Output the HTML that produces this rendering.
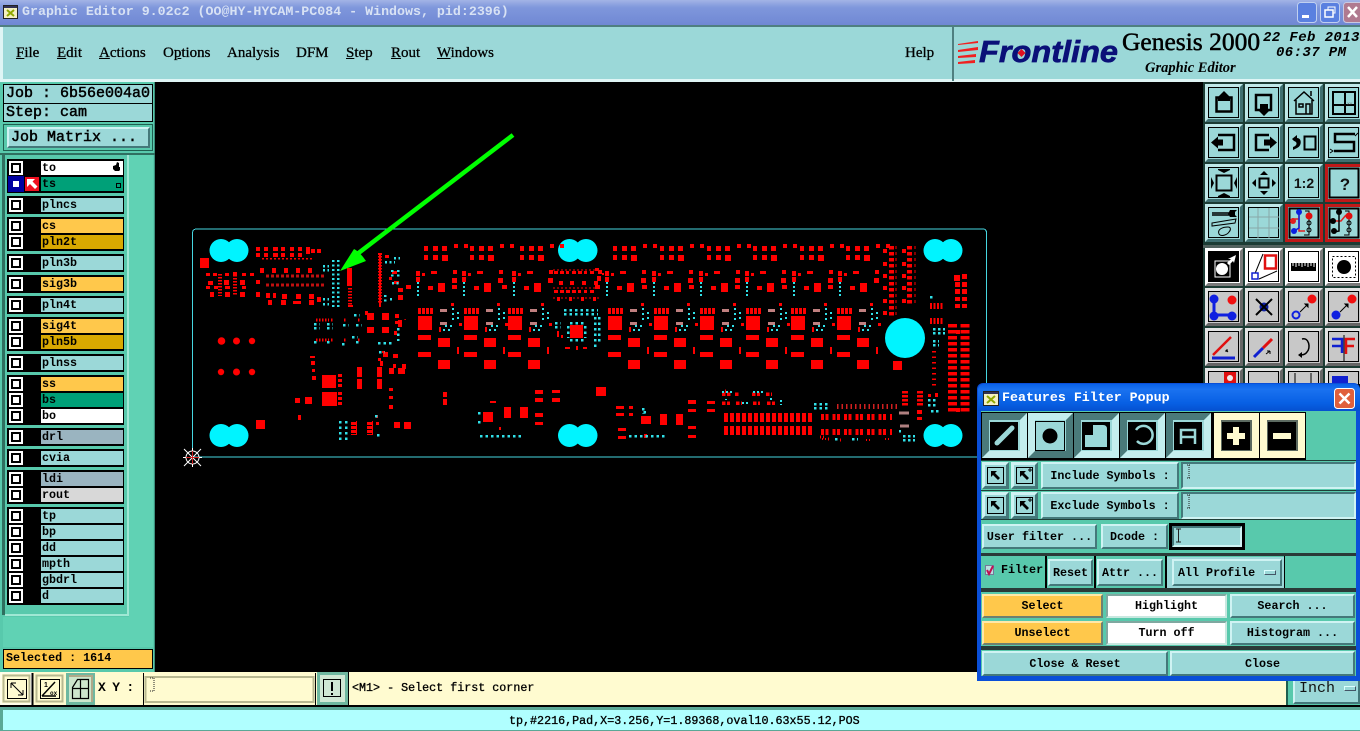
<!DOCTYPE html>
<html><head><meta charset="utf-8"><title>Graphic Editor</title>
<style>
html,body{margin:0;padding:0;width:1360px;height:731px;overflow:hidden;background:#000}
.a{position:absolute;box-sizing:border-box}
.t{position:absolute;white-space:pre;font-family:"Liberation Mono",monospace;font-weight:bold;font-size:11.7px;color:#000}
.mn{position:absolute;top:45px;font:15px/17px "Liberation Serif",serif;color:#000;white-space:pre;-webkit-text-stroke:.3px #000}
.mn u{text-decoration:underline}
.g{position:absolute;left:7px;width:117px;background:#000}
.l{position:absolute;left:41px;width:82px;height:14px;font:bold 11.7px/14px "Liberation Mono",monospace;padding-left:1px;box-sizing:border-box;background:#9bd8d8;color:#000;white-space:pre}
.c{position:absolute;left:9px;width:14px;height:14px;box-sizing:border-box;border:2px solid #fff;background:#000}
.c:after{content:"";position:absolute;left:2px;top:2px;width:6px;height:6px;background:#fff}
.b{position:absolute;box-sizing:border-box;background:#9bd8d8;border:2px solid;border-color:#cff3f3 #44787a #44787a #cff3f3;font:bold 11.7px "Liberation Mono",monospace;color:#000;text-align:center;white-space:pre;display:flex;align-items:center;justify-content:center}
.o{background:#ffc84b;border-color:#ffe8a8 #6f8070 #6f8070 #ffe8a8}
.w{background:#fff;border-color:#7fa8a0 #c8e8e0 #c8e8e0 #7fa8a0}
.in{position:absolute;box-sizing:border-box;background:#9bd8d8;border:2px solid;border-color:#44787a #cff3f3 #cff3f3 #44787a}
</style></head><body>

<!-- title bar -->
<div class="a" style="left:0;top:0;width:1360px;height:25px;background:linear-gradient(#a3b4e6,#7f97dc 30%,#7088d4)"></div>
<svg class="a" style="left:3px;top:5px" width="15" height="14"><rect width="15" height="14" fill="#222"/><rect x="1" y="1" width="13" height="12" fill="#f4f0c0"/><rect x="1" y="1" width="13" height="2" fill="#335"/><path d="M4 5l7 6M11 5l-7 6" stroke="#90a800" stroke-width="2"/></svg>
<div class="t" style="left:22px;top:4px;font-size:13.3px;line-height:15px;color:#d8e2f4">Graphic Editor 9.02c2 (OO@HY-HYCAM-PC084 - Windows, pid:2396)</div>
<svg class="a" style="left:1296px;top:1px" width="64" height="23">
<rect x="1.500" y="1.500" width="19" height="20" rx="3" fill="#5a80e0" stroke="#c0d0f0"/><rect x="6" y="14" width="7" height="3" fill="#fff"/>
<rect x="24.500" y="1.500" width="19" height="20" rx="3" fill="#5a80e0" stroke="#c0d0f0"/><rect x="29" y="9" width="8" height="7" fill="none" stroke="#fff" stroke-width="1.500"/><path d="M32 9V6h7v6h-2" fill="none" stroke="#fff"/>
<rect x="47.500" y="1.500" width="20" height="20" rx="3" fill="#b07a90" stroke="#c8c8e0"/><path d="M52 6l9 10M61 6l-9 10" stroke="#fff" stroke-width="2.500"/></svg>

<!-- menu -->
<div class="a" style="left:0;top:25px;width:1360px;height:57px;background:#9bd8d8;border-top:2px solid #4f7f80;border-bottom:3px solid #dff5f5"></div>
<div class="a" style="left:0;top:27px;width:3px;height:52px;background:#dff5f5"></div>
<div class="a" style="left:952px;top:27px;width:2px;height:54px;background:#4f7f80"></div>
<div class="mn" style="left:16px"><u>F</u>ile</div>
<div class="mn" style="left:57px"><u>E</u>dit</div>
<div class="mn" style="left:99px"><u>A</u>ctions</div>
<div class="mn" style="left:163px">O<u>p</u>tions</div>
<div class="mn" style="left:227px">Analysis</div>
<div class="mn" style="left:296px">DFM</div>
<div class="mn" style="left:346px"><u>S</u>tep</div>
<div class="mn" style="left:391px"><u>R</u>out</div>
<div class="mn" style="left:437px"><u>W</u>indows</div>
<div class="mn" style="left:905px">Help</div>

<svg class="a" style="left:955px;top:28px" width="170" height="48">
<path d="M3 16L23 13V15L3 17zM3 22L23 19V22L3 24zM3 28L21 26V29L3 30zM3 34L20 32V35L3 36z" fill="#f02020"/>
<text x="24" y="34" font-family="Liberation Sans" font-weight="bold" font-style="italic" font-size="31" fill="#0a1078" stroke="#0a1078" stroke-width=".7" textLength="139" lengthAdjust="spacingAndGlyphs">Frontline</text>
<path d="M66.500 21l4 4-4 4-4-4z" fill="#e01020"/></svg>
<div class="a" style="left:1122px;top:27px;font:25.500px/29px 'Liberation Serif',serif;white-space:pre;-webkit-text-stroke:.5px #000">Genesis 2000</div>
<div class="a" style="left:1145px;top:60px;font:italic bold 14.500px/16px 'Liberation Serif',serif;white-space:pre">Graphic Editor</div>
<div class="t" style="left:1263px;top:31px;font:italic bold 14px/15px 'Liberation Mono',monospace;letter-spacing:.4px">22 Feb 2013</div>
<div class="t" style="left:1276px;top:46px;font:italic bold 14px/15px 'Liberation Mono',monospace;letter-spacing:.4px">06:37 PM</div>

<!-- left panel -->
<div class="a" style="left:0;top:82px;width:155px;height:591px;background:#58c9ac;border-right:1px solid #3c8f7c"></div>
<div class="a" style="left:3px;top:84px;width:150px;height:20px;background:#9bd8d8;border:1px solid #000"></div>
<div class="a" style="left:3px;top:103px;width:150px;height:19px;background:#9bd8d8;border:1px solid #000"></div>
<div class="t" style="left:6px;top:85px;font-size:15px;line-height:17px;font-weight:normal;-webkit-text-stroke:.5px #000">Job : 6b56e004a0</div>
<div class="t" style="left:6px;top:104px;font-size:15px;line-height:17px;font-weight:normal;-webkit-text-stroke:.5px #000">Step: cam</div>
<div class="a" style="left:3px;top:124px;width:150px;height:27px;background:#58c9ac;border:1px solid #1f5f50"></div>
<div class="b" style="left:7px;top:127px;width:143px;height:21px;justify-content:flex-start;padding-left:2px;font-size:15px;font-weight:normal;-webkit-text-stroke:.5px #000">Job Matrix ...</div>
<div class="a" style="left:0;top:153px;width:155px;height:2px;background:#2f6f60"></div>
<div class="a" style="left:2px;top:155px;width:3px;height:460px;background:#2f6f60"></div>
<div class="a" style="left:127px;top:155px;width:2px;height:460px;background:#9fe8d4"></div>
<div class="a" style="left:129px;top:155px;width:24px;height:462px;background:#60d2b4"></div>
<div class="a" style="left:5px;top:614px;width:124px;height:2px;background:#9fe8d4"></div>
<div class="a" style="left:3px;top:617px;width:150px;height:30px;background:#60d2b4"></div>
<div class="a" style="left:3px;top:649px;width:150px;height:20px;background:#ffc84b;border:1px solid #000"></div>
<div class="t" style="left:6px;top:651px;line-height:15px">Selected : 1614</div>

<div class="g" style="top:159px;height:34px"></div>
<div class="g" style="top:196px;height:18px"></div>
<div class="g" style="top:217px;height:34px"></div>
<div class="g" style="top:254px;height:18px"></div>
<div class="g" style="top:275px;height:18px"></div>
<div class="g" style="top:296px;height:18px"></div>
<div class="g" style="top:317px;height:34px"></div>
<div class="g" style="top:354px;height:18px"></div>
<div class="g" style="top:375px;height:50px"></div>
<div class="g" style="top:428px;height:18px"></div>
<div class="g" style="top:449px;height:18px"></div>
<div class="g" style="top:470px;height:34px"></div>
<div class="g" style="top:507px;height:98px"></div>

<div class="l" style="top:161px;background:#fff">to</div>
<div class="l" style="top:177px;background:#00a078">ts</div>
<div class="l" style="top:198px">plncs</div>
<div class="l" style="top:219px;background:#ffc84b">cs</div>
<div class="l" style="top:235px;background:#d8a800">pln2t</div>
<div class="l" style="top:256px">pln3b</div>
<div class="l" style="top:277px;background:#ffc84b">sig3b</div>
<div class="l" style="top:298px">pln4t</div>
<div class="l" style="top:319px;background:#ffc84b">sig4t</div>
<div class="l" style="top:335px;background:#d8a800">pln5b</div>
<div class="l" style="top:356px">plnss</div>
<div class="l" style="top:377px;background:#ffc84b">ss</div>
<div class="l" style="top:393px;background:#00a078">bs</div>
<div class="l" style="top:409px;background:#fff">bo</div>
<div class="l" style="top:430px;background:#9ab4c0">drl</div>
<div class="l" style="top:451px">cvia</div>
<div class="l" style="top:472px;background:#9ab4c0">ldi</div>
<div class="l" style="top:488px;background:#d8d8d8">rout</div>
<div class="l" style="top:509px">tp</div>
<div class="l" style="top:525px">bp</div>
<div class="l" style="top:541px">dd</div>
<div class="l" style="top:557px">mpth</div>
<div class="l" style="top:573px">gbdrl</div>
<div class="l" style="top:589px">d</div>

<div class="a" style="left:8px;top:176px;width:16px;height:16px;background:#0000a0"></div>
<div class="c" style="top:161px"></div><div class="c" style="top:177px;border-color:#0000a0;background:#0000a0"></div>
<div class="c" style="top:198px"></div><div class="c" style="top:219px"></div><div class="c" style="top:235px"></div><div class="c" style="top:256px"></div><div class="c" style="top:277px"></div><div class="c" style="top:298px"></div><div class="c" style="top:319px"></div><div class="c" style="top:335px"></div><div class="c" style="top:356px"></div><div class="c" style="top:377px"></div><div class="c" style="top:393px"></div><div class="c" style="top:409px"></div><div class="c" style="top:430px"></div><div class="c" style="top:451px"></div><div class="c" style="top:472px"></div><div class="c" style="top:488px"></div><div class="c" style="top:509px"></div><div class="c" style="top:525px"></div><div class="c" style="top:541px"></div><div class="c" style="top:557px"></div><div class="c" style="top:573px"></div><div class="c" style="top:589px"></div>
<svg class="a" style="left:0;top:155px" width="125" height="40">
<rect x="25" y="22" width="14" height="14" fill="#f01020"/><path d="M27 24h8l-2.500 2.500 5 5-2.500 2.500-5-5-3 3z" fill="#fff"/>
<path d="M113 11l3-1 1-3 2 1v4h1v3l-1 1h-4l-2-2z" fill="#000"/>
<rect x="116.500" y="28.500" width="4" height="4" fill="none" stroke="#000"/></svg>

<!-- PCB -->
<svg class="a" style="left:0;top:0" width="1360" height="731" shape-rendering="crispEdges">
<defs>
<g id="top"><path d="M-3 246h4v5h-4zM6 246h5v5h-5zM15 246h5v5h-5zM-3 255h4v5h-4zM6 255h5v5h-5zM15 255h6v6h-6zM27 244h4v4h-4zM37 244h4v4h-4z
M-11 271h4v5h-4zM-11 277h4v5h-4zM-5 273h3v3h-3zM4 271h6v3h-6zM26 270h4v4h-4zM25 278h5v5h-5zM1 286h5v4h-5zM11 283h7v9h-7zM-21 285h5v4h-5z" fill="#f00"/>
<path d="M-9 282v16" stroke="#30e0e8" stroke-width="2" stroke-dasharray="2 2"/></g>
<g id="ch"><path d="M-7 316h14v14h-14zM-7 308h3v6h-3zM-3 308h3v6h-3zM1 308h3v6h-3zM5 308h3v6h-3zM-7 335h13v5h-13zM-7 352h13v5h-13zM13 338h12v9h-12zM13 360h12v9h-12zM32 347h2v7h-2zM26 303h3v3h-3zM14 327h2v5h-2zM34 323h3v3h-3z" fill="#f00"/>
<path d="M15 309h7v3h-7zM15 322h7v3h-7z" fill="#c08080"/>
<path d="M28 308v14M33 312v8" stroke="#30e0e8" stroke-width="2" stroke-dasharray="2 3"/>
<path d="M18 330h10M20 326h8" stroke="#30e0e8" stroke-width="2" stroke-dasharray="2 3"/></g>
</defs>
<path d="M192.500 233Q192.500 229 196.500 229H983Q986.500 229 986.500 233V457H192.500Z" fill="none" stroke="#46d6e0"/>
<g shape-rendering="auto" fill="#00f4ff">
<circle cx="221" cy="250.500" r="11.500"/><circle cx="237" cy="250.500" r="11.500"/>
<circle cx="221" cy="435.500" r="11.500"/><circle cx="237" cy="435.500" r="11.500"/>
<circle cx="569.500" cy="250.500" r="11.500"/><circle cx="586" cy="250.500" r="11.500"/>
<circle cx="569.500" cy="435.500" r="11.500"/><circle cx="586" cy="435.500" r="11.500"/>
<circle cx="935" cy="250.500" r="11.500"/><circle cx="951" cy="250.500" r="11.500"/>
<circle cx="935" cy="435.500" r="11.500"/><circle cx="951" cy="435.500" r="11.500"/>
<circle cx="905" cy="338" r="20"/>
</g>
<!-- channels -->
<use href="#top" x="427"/><use href="#top" x="473"/><use href="#top" x="523"/><use href="#top" x="616"/><use href="#top" x="663"/><use href="#top" x="710"/><use href="#top" x="756"/><use href="#top" x="803"/><use href="#top" x="849"/>
<use href="#ch" x="425"/><use href="#ch" x="471"/><use href="#ch" x="515"/><use href="#ch" x="615"/><use href="#ch" x="661"/><use href="#ch" x="707"/><use href="#ch" x="753"/><use href="#ch" x="798"/><use href="#ch" x="844"/>
<!-- top-left -->
<path fill="#f00" d="M200 258h9v10h-9zM256 247h4v4h-4zM264 247h4v4h-4zM273 247h5v4h-5zM281 247h4v4h-4zM290 247h4v4h-4zM298 247h4v4h-4zM306 247h4v4h-4zM256 253h4v4h-4zM264 253h4v4h-4zM273 253h5v4h-5zM281 253h4v4h-4zM290 253h4v4h-4zM298 253h4v4h-4zM306 251h4v3h-4zM311 249h4v4h-4zM317 249h4v4h-4zM260 268h4v5h-4zM272 268h4v5h-4zM284 268h4v5h-4zM296 268h4v5h-4zM308 268h4v5h-4zM206 273h4v3h-4zM213 273h4v3h-4zM225 273h4v3h-4zM233 273h4v3h-4zM242 273h4v3h-4zM250 273h4v3h-4zM208 281h5v4h-5zM224 280h5v5h-5zM240 280h5v5h-5zM256 280h4v4h-4zM206 286h4v3h-4zM214 286h4v3h-4zM225 286h5v3h-5zM242 286h4v3h-4zM210 292h4v5h-4zM225 292h5v5h-5zM240 292h5v5h-5zM256 292h4v5h-4zM266 293h4v5h-4zM273 293h3v5h-3zM282 294h5v5h-5zM296 294h5v5h-5zM309 294h5v5h-5zM268 300h4v5h-4zM281 300h5v5h-5zM293 301h8v3h-8zM309 300h5v5h-5zM317 297h4v5h-4zM347 268h5v18h-5zM348 305h5v2h-5zM378 253h4v2h-4zM382 333h-1z
M385 255h4v3h-4zM389 252h-1zM390 262h-1zM392 271h5v3h-5zM394 281h5v3h-5zM398 288h5v4h-5zM398 295h5v5h-5zM389 277h3v3h-3z"/>
<path d="M262 258.500H314" stroke="#f00" stroke-width="1.500" stroke-dasharray="2 2" fill="none"/>
<path d="M266 276H326M266 285H326" stroke="#c01010" stroke-width="3" stroke-dasharray="3 2" fill="none"/>
<path d="M235 272v24M220 274v22M350 288v17M380 256v48" stroke="#f00" stroke-width="4" stroke-dasharray="1.500 1.500" fill="none"/>
<path d="M380 255v52" stroke="#f00" stroke-width="2" fill="none"/>
<path d="M333 260v48M338 260v48M323 266h6M323 270h6M323 299h6M323 304h6M385 262h10M394 258h6M392 270v8M398 270v8M392 283h8M385 295v8M390 299h4" stroke="#30e0e8" stroke-width="2.500" stroke-dasharray="2 2.500" fill="none"/>
<!-- mid-left -->
<path fill="#f00" d="M367 313h7v7h-7zM382 313h7v7h-7zM367 327h7v6h-7zM382 327h7v6h-7zM365 311h3v4h-3zM395 314h4v4h-4zM395 321h4v3h-4zM395 332h-1zM394 331h3v4h-3zM402 353h-1zM378 358h3v3h-3zM393 354h5v4h-5zM382 351h3v2h-3zM383 352h5v5h-5zM384 351h-1zM380 361h3v5h-3zM402 364h4v5h-4zM393 364h3v4h-3zM398 320h4v7h-4zM403 320h3v-1zM322 375h14v13h-14zM322 392h15v14h-15zM338 374h4v3h-4zM338 379h4v3h-4zM338 384h4v3h-4zM338 392h4v3h-4zM338 397h4v3h-4zM338 402h4v3h-4zM357 367h5v10h-5zM357 379h5v10h-5zM377 367h5v10h-5zM377 379h5v10h-5zM389 368h5v6h-5zM398 368h7v6h-7zM295 398h5v5h-5zM305 397h7v7h-7zM298 415h3v5h-3zM256 420h9v9h-9zM394 422h6v6h-6zM404 422h7v7h-7zM351 421h6v14h-6zM367 421h6v14h-6zM443 393h-1zM443 392h4v5h-4zM443 399h4v6h-4zM308 388h-1zM312 396h-1zM310 356h5v2h-5zM311 361h4v4h-4zM312 369h3v3h-3zM312 376h4v4h-4zM389 388h4v3h-4zM389 396h4v3h-4zM389 405h4v4h-4zM376 415h2v3h-2zM377 426h-1zM376 422h3v3h-3z"/>
<path fill="none" stroke="#f00" stroke-width="3" stroke-dasharray="1.500 1.500" d="M316 320h13M331 320h3M344 320h3M358 320h3M316 340h13M331 340h3M344 340h3M358 340h3"/>
<path d="M351 421v14M367 421v14" stroke="#000" stroke-width="10" stroke-dasharray="1 3" fill="none"/>
<path fill="none" stroke="#30e0e8" stroke-width="2.500" stroke-dasharray="2.500 3" d="M314 324h6M327 324h6M314 328h6M327 328h6M343 325h6M356 325h6M314 342h3M327 342h3M342 344h4M356 342h3M354 315h6M352 337h6M378 343h14M379 352h6M398 328v13M340 421v20M346 421v20M376 415v4M377 435h5"/>
<!-- QFN etc -->
<path fill="#f00" d="M570 325h13v13h-13zM554 271h4v3h-4zM560 271h4v3h-4zM566 271h3v3h-3zM572 271h4v3h-4zM578 271h4v3h-4zM584 271h3v3h-3zM590 271h4v3h-4zM598 270h4v4h-4zM597 276h4v5h-4zM559 281h4v4h-4zM570 281h4v4h-4zM582 281h4v4h-4zM594 281h4v4h-4zM554 290h4v3h-4zM560 290h4v3h-4zM566 290h4v3h-4zM572 290h4v3h-4zM578 290h3v3h-3zM584 290h3v3h-3zM590 290h4v3h-4zM557 297h3v4h-3zM569 297h3v4h-3zM581 297h3v4h-3zM593 297h3v4h-3zM595 268h4v3h-4zM602 273h2v2h-2zM557 331h2v6h-2zM561 335h2v3h-2zM565 347h5v2h-5zM576 346h2v4h-2zM583 347h4v2h-4z
M535 390h8v4h-8zM535 398h8v4h-8zM535 413h8v4h-8zM535 422h8v3h-8zM552 390h8v3h-8zM552 398h8v4h-8zM596 387h10v9h-10zM504 407h7v11h-7zM520 407h8v11h-8zM483 412h10v10h-10zM616 406h8v3h-8zM616 413h8v3h-8zM618 428h8v3h-8zM618 436h8v3h-8zM629 406h4v3h-4zM629 413h4v3h-4zM660 414h7v11h-7zM676 414h7v11h-7zM641 416h10v8h-10zM688 400h8v4h-8zM688 409h8v3h-8zM688 426h8v3h-8zM688 435h8v3h-8zM707 401h8v3h-8zM707 409h8v3h-8zM644 434h3v4h-3zM490 401h6v2h-6zM490 403h-1zM499 427h2v3h-2z"/>
<path d="M564 310h34M564 314h34M595 317v33M599 317v26M555 323h6M555 327h6M570 323h14M570 340h14M568 326v12M585 326v12M480 436h44M629 436h38M643 408v6M646 412h-4M478 422h4M478 413h3" fill="none" stroke="#30e0e8" stroke-width="2.500" stroke-dasharray="2.500 3"/>
<path d="M553 270H601M553 288H601M553 298H601" stroke="#f00" stroke-width="1" stroke-dasharray="2 2" fill="none"/>
<!-- striped -->
<path d="M724 417.500H812M724 430.500H812" stroke="#f00" stroke-width="9" stroke-dasharray="4 2" fill="none"/>
<path d="M722 394h9M735 394h5M752 394h8M766 394h6M722 403h8M736 403h6M753 403h7M767 403h8M726 391h-1" fill="none" stroke="#f00" stroke-width="3.500" stroke-dasharray="3.500 1.500"/>
<path d="M722 392h12M753 392h12M742 403h6M771 398v3M781 400v5M726 399v1" fill="none" stroke="#30e0e8" stroke-width="2" stroke-dasharray="2 2"/>
<path d="M814 404H828M814 408H828" fill="none" stroke="#30e0e8" stroke-width="2.500" stroke-dasharray="2.500 3"/>
<path d="M837 406.500H898" fill="none" stroke="#d02020" stroke-width="5" stroke-dasharray="1.500 3"/>
<path d="M821 417H892M821 432H892" fill="none" stroke="#f00" stroke-width="6" stroke-dasharray="3 1.500 3 4"/>
<path d="M905 391v16M920 391v16" fill="none" stroke="#f00" stroke-width="6" stroke-dasharray="2.500 1.500"/>
<path fill="#f00" d="M893 361h9v9h-9zM917 410h5v4h-5zM917 417h5v3h-5zM928 394h3v3h-3zM935 393h3v4h-3zM937 398h-1zM927 408h-1zM907 413h-1zM908 412h-1z"/>
<!-- right -->
<path d="M952.500 324V413M965 324V413" fill="none" stroke="#f00" stroke-width="9" stroke-dasharray="3.500 2.500"/>
<path fill="#f00" d="M956 330h4v4h-4zM956 408h4v4h-4zM954 275h6v6h-6zM962 274h5v5h-5zM955 282h5v5h-5zM962 282h5v5h-5zM955 289h5v5h-5zM962 289h5v5h-5zM955 297h5v4h-5zM962 297h5v4h-5zM955 304h5v4h-5zM962 304h5v4h-5zM883 249h4v4h-4zM883 262h4v4h-4zM883 274h4v4h-4zM883 286h4v4h-4zM883 299h4v4h-4zM883 311h4v4h-4zM902 249h4v4h-4zM902 262h4v4h-4zM902 274h4v4h-4zM902 286h4v4h-4zM902 299h4v4h-4z"/>
<path d="M891.500 246V318M909.500 246V306" fill="none" stroke="#f00" stroke-width="5" stroke-dasharray="3.500 2.500"/>
<path d="M896 246V318M915 246V306" fill="none" stroke="#f00" stroke-width="1" stroke-dasharray="3 3"/>
<path d="M930 306h14M930 321h14" fill="none" stroke="#f00" stroke-width="6" stroke-dasharray="2 1.500"/>
<path d="M934 351V388" fill="none" stroke="#f00" stroke-width="4" stroke-dasharray="1.500 4"/>
<path d="M931 296v3M933 329h12M933 333h12M933 341h6M933 345h6M928 400h8M928 405h8M931 411h8M899 413h8M899 431h2M903 436h12M903 440h12M835 439h4M852 439h6" fill="none" stroke="#30e0e8" stroke-width="2.500" stroke-dasharray="2.500 2.500"/>
<path d="M899 413h10M900 426h9" stroke="#b08080" stroke-width="3"/>
<path d="M820 437h4M828 439h2M840 440h2" stroke="#f00" stroke-width="3" stroke-dasharray="1 2"/>
<path d="M822 439h6M866 440h4M885 439h4" stroke="#f00" stroke-width="2" stroke-dasharray="1 2"/>
<!-- red dots -->
<g shape-rendering="auto" fill="#f00"><circle cx="221.500" cy="341" r="3.800"/><circle cx="236.500" cy="341" r="3.500"/><circle cx="252" cy="341" r="3.200"/><circle cx="221" cy="372" r="3.200"/><circle cx="236.500" cy="372" r="3.500"/><circle cx="252" cy="372" r="3.200"/></g>
<!-- arrow -->
<g shape-rendering="auto"><path d="M513 135L352 258" stroke="#00ff00" stroke-width="4.500"/><path d="M340 271L354 249Q360 252 366 261Z" fill="#00ff00"/>
<g fill="none" stroke="#fff"><circle cx="192.500" cy="457.500" r="6.500"/><path d="M184 449l17 17M201 449l-17 17M183 457.500h19M192.500 448v19"/></g>
<path d="M186 457.500h13M192.500 451v13" stroke="#d02020"/></g>
</svg>

<!-- right toolbar -->
<svg class="a" style="left:1203px;top:82px" width="157" height="302">
<defs>
<g id="bt"><rect width="38" height="38" fill="#9bd8d8"/><path d="M0 0H38L35 3H3V35L0 38Z" fill="#bfe8e8"/><path d="M38 0V38H0L3 35H35V3Z" fill="#3f6f70"/><rect x="3.500" y="3.500" width="30" height="30" fill="none" stroke="#000"/></g>
<g id="bg"><rect width="38" height="38" fill="#c8c8c8"/><path d="M0 0H38L35 3H3V35L0 38Z" fill="#e4e4e4"/><path d="M38 0V38H0L3 35H35V3Z" fill="#666"/><rect x="3.500" y="3.500" width="30" height="30" fill="none" stroke="#000"/></g>
<g id="bw"><rect width="38" height="38" fill="#fff"/><path d="M38 0V38H0L3 35H35V3Z" fill="#7a7a7a"/><rect x="3.500" y="3.500" width="30" height="30" fill="none" stroke="#000"/></g>
<g id="br"><rect width="38" height="38" fill="#c01818"/><rect x="3" y="3" width="32" height="32" fill="#9bd8d8"/><rect x="4.500" y="4.500" width="29" height="29" fill="none" stroke="#000" stroke-width="2"/></g>
</defs>
<rect width="157" height="302" fill="#1c3c34"/>
<rect y="163" width="157" height="3" fill="#888" opacity=".5"/>
<!-- row 1 -->
<g transform="translate(2,2)"><use href="#bt"/><path d="M11.500 13.500h15v14h-15z" fill="none" stroke="#000" stroke-width="2.500"/><path d="M19 7l6 6v4H13v-4z" fill="#000"/></g>
<g transform="translate(42,2)"><use href="#bt"/><path d="M11 11h15v15H11z" fill="none" stroke="#000" stroke-width="2.500"/><path d="M15 20h8v5h3l-7 7-7-7h3z" fill="#000"/></g>
<g transform="translate(82,2)"><use href="#bt"/><path d="M9 17L19 8l10 9M11 16v14h16V16M14 20h4v3h-4zM21 20h4v10h-4zM26 7v5" fill="none" stroke="#000" stroke-width="1.500"/></g>
<g transform="translate(122,2)"><use href="#bt"/><path d="M8 8h22v22H8zM8 21h22M20 8v22" fill="none" stroke="#000" stroke-width="2"/><text x="22" y="21" font-family="Liberation Sans" font-size="4" fill="#555">XY</text></g>
<!-- row 2 -->
<g transform="translate(2,42)"><use href="#bt"/><path d="M13 11h16v15H13" fill="none" stroke="#000" stroke-width="2.500"/><path d="M6 18.500l7-6v3h5v6h-5v3z" fill="#000"/></g>
<g transform="translate(42,42)"><use href="#bt"/><path d="M24 11H11v15h13" fill="none" stroke="#000" stroke-width="2.500"/><path d="M32 18.500l-7-6v3h-6v6h6v3z" fill="#000"/></g>
<g transform="translate(82,42)"><use href="#bt"/><path d="M19.500 12.500h11v13h-11z" fill="none" stroke="#000" stroke-width="2"/><path d="M7 15l5-4v3c5 0 5 8 0 10l-4 2v-3c4-1 5-5 1-6z" fill="#000"/></g>
<g transform="translate(122,42)"><use href="#bt"/><path d="M30 10H10v8h19v9H9" fill="none" stroke="#000" stroke-width="2.500"/><path d="M33 9l-3 3M5 25l3 2-3 2" fill="none" stroke="#000"/></g>
<!-- row 3 -->
<g transform="translate(2,82)"><use href="#bt"/><rect x="11.500" y="11.500" width="15" height="15" fill="none" stroke="#000" stroke-width="2"/><path d="M19 9l-6-3h12zM19 29l-6 3h12zM9 19L6 13v12zM29 19l3-6v12z" fill="#000"/><path d="M13 5h12v1H13zM13 32h12v1H13z"/></g>
<g transform="translate(42,82)"><use href="#bt"/><rect x="14.500" y="14.500" width="9" height="9" fill="none" stroke="#000" stroke-width="2"/><path d="M19 7l-4 4h8zM19 31l-4-4h8zM7 19l4-4v8zM31 19l-4-4v8z" fill="#000"/></g>
<g transform="translate(82,82)"><use href="#bt"/><text x="19" y="24" text-anchor="middle" font-family="Liberation Sans, sans-serif" font-weight="bold" font-size="14" fill="#111">1:2</text></g>
<g transform="translate(122,82)"><use href="#br"/><text x="20" y="26" text-anchor="middle" font-family="Liberation Sans, sans-serif" font-weight="bold" font-size="17" fill="#111">?</text></g>
<!-- row 4 -->
<g transform="translate(2,122)"><use href="#bt"/><path d="M7 9h17M7 11h17" stroke="#000" stroke-width="1.500"/><path d="M25 6h7l-2 2v3l2 2h-7l-2-3z" fill="#000"/><path d="M7 19l24-4-1 4-23 3z" fill="none" stroke="#000"/><path d="M14 30c-2-5 4-7 9-7 3 0 3 3 1 5-2 3-8 5-10 2z" fill="none" stroke="#000"/></g>
<g transform="translate(42,122)"><use href="#bt"/><path d="M13 4v30M24 4v30M4 13h30M4 24h30" stroke="#88a8a8"/></g>
<g transform="translate(82,122)"><use href="#br"/><path d="M20 7h4v24h-5" fill="none" stroke="#000"/><path d="M7 15h7M14 7v20h6" fill="none" stroke="#e02020" stroke-width="1.500"/><circle cx="8" cy="17" r="3" fill="#e02020"/><circle cx="14" cy="8" r="3" fill="#0a20e0"/><circle cx="9" cy="27" r="3" fill="#0a20e0"/><path d="M14 10v14l-5 3" fill="none" stroke="#0a20e0" stroke-width="1.500"/><circle cx="24" cy="12" r="3.500" fill="#e01010"/><circle cx="24" cy="19" r="2" fill="none" stroke="#000"/><circle cx="24" cy="26" r="2" fill="none" stroke="#000"/></g>
<g transform="translate(122,122)"><use href="#br"/><path d="M20 7h4v24h-5" fill="none" stroke="#000"/><path d="M8 17h8l5-6" fill="none" stroke="#e02020" stroke-width="1.500"/><path d="M14 8v19l-5 1" fill="none" stroke="#000" stroke-width="1.500"/><circle cx="8" cy="17" r="3" fill="#000"/><circle cx="14" cy="8" r="3" fill="#000"/><circle cx="9" cy="27" r="3" fill="#000"/><circle cx="24" cy="12" r="3.500" fill="#e01010"/><circle cx="24" cy="19" r="2" fill="none" stroke="#000"/><circle cx="24" cy="26" r="2" fill="none" stroke="#000"/></g>
<!-- group 2 row 1 -->
<g transform="translate(2,166)"><use href="#bw"/><rect x="4" y="4" width="29" height="29" fill="#000"/><path d="M10 13h15v16H10z" fill="none" stroke="#fff"/><circle cx="17" cy="21" r="6" fill="#fff"/><path d="M23 11l8-4-2 8-1-2-4 4-2-2 4-4z" fill="#fff"/></g>
<g transform="translate(42,166)"><use href="#bw"/><path d="M9 28L18 6M14 31l18-8" stroke="#000"/><rect x="20" y="7.500" width="11" height="13" fill="#fff" stroke="#e01010" stroke-width="2.500"/><rect x="7" y="25" width="6" height="6" fill="#fff" stroke="#1020d0" stroke-width="1.500"/></g>
<g transform="translate(82,166)"><use href="#bw"/><rect x="6" y="15" width="25" height="8" fill="#000"/><path d="M8 15v3M11 15v4M14 15v3M17 15v4M20 15v3M23 15v4M26 15v3M29 15v4" stroke="#fff"/></g>
<g transform="translate(122,166)"><use href="#bw"/><rect x="7.500" y="8.500" width="23" height="21" fill="none" stroke="#000" stroke-dasharray="2 2"/><circle cx="19" cy="19" r="7" fill="#000"/></g>
<!-- row 2 -->
<g transform="translate(2,206)"><use href="#bg"/><path d="M9 12v15h18" fill="none" stroke="#1020e0" stroke-width="3"/><circle cx="9" cy="11" r="4.500" fill="#1020e0"/><circle cx="9" cy="28" r="4.500" fill="#1020e0"/><circle cx="27" cy="28" r="4.500" fill="#1020e0"/><circle cx="27" cy="12" r="4.500" fill="#f01010"/></g>
<g transform="translate(42,206)"><use href="#bg"/><circle cx="19" cy="19" r="4.500" fill="#1020a0"/><path d="M11 11l16 16M27 11L11 27" stroke="#000" stroke-width="2"/></g>
<g transform="translate(82,206)"><use href="#bg"/><circle cx="27" cy="11" r="4.500" fill="#f01010"/><circle cx="11" cy="27" r="3.500" fill="none" stroke="#1020e0" stroke-width="2"/><path d="M15 24l8-8M23 16l-3 0 3 3z" stroke="#000" fill="#000"/></g>
<g transform="translate(122,206)"><use href="#bg"/><circle cx="27" cy="11" r="4.500" fill="#f01010"/><circle cx="11" cy="27" r="4.500" fill="#1020e0"/><path d="M15 24l8-8M23 16l-3 0 3 3z" stroke="#000" fill="#000"/></g>
<!-- row 3 -->
<g transform="translate(2,246)"><use href="#bg"/><path d="M8 27L26 9" stroke="#e01010" stroke-width="2.500"/><path d="M7 30h23" stroke="#1020d0" stroke-width="3"/><path d="M23 24l-2-2M21 22v2M21 22h2" stroke="#000"/></g>
<g transform="translate(42,246)"><use href="#bg"/><path d="M9 29l9-9" stroke="#1020d0" stroke-width="3"/><path d="M18 20l9-9" stroke="#e01010" stroke-width="3"/><path d="M21 26l4-3M25 23h-3M25 23v3" stroke="#000"/></g>
<g transform="translate(82,246)"><use href="#bg"/><path d="M17 11c7-2 9 9 5 13-2 3-5 3-8 3" fill="none" stroke="#000" stroke-width="1.500"/><path d="M13 27l4-3v6z" fill="#000"/></g>
<g transform="translate(122,246)"><use href="#bg"/><path d="M7 11h10v14M7 18h9" fill="none" stroke="#1020d0" stroke-width="2.500"/><path d="M30 11H21v15M21 18h8" fill="none" stroke="#e01010" stroke-width="2.500"/><path d="M19 7v26" stroke="#000"/></g>
<!-- row 4 -->
<g transform="translate(2,286)"><use href="#bg"/><rect x="19" y="4" width="12" height="12" fill="#e01010"/><circle cx="25" cy="10" r="3" fill="#eee"/></g>
<g transform="translate(42,286)"><use href="#bg"/></g>
<g transform="translate(82,286)"><use href="#bg"/><path d="M10 5v12M26 5v12" stroke="#000"/></g>
<g transform="translate(122,286)"><use href="#bg"/><rect x="7" y="8" width="16" height="8" fill="#1020d0"/></g>
</svg>

<!-- bottom bar -->
<div class="a" style="left:0;top:672px;width:1360px;height:33px;background:#fffbd0"></div>
<svg class="a" style="left:0;top:672px" width="350" height="34">
<rect x="31.500" y="1" width="2" height="32" fill="#000"/>
<rect x="1" y="1" width="30" height="31" fill="#fffbd0" stroke="#fff"/>
<rect x="3.500" y="3.500" width="26" height="26" fill="none" stroke="#b8b890" stroke-width="2"/>
<rect x="7.500" y="7.500" width="19" height="19" fill="none" stroke="#000"/><path d="M11 11l12 12M11 11h5M11 11v5M23 23h-5M23 23v-5" fill="none" stroke="#000"/>
<rect x="36.500" y="3.500" width="26" height="26" fill="none" stroke="#b8b890" stroke-width="2"/>
<rect x="40.500" y="7.500" width="19" height="19" fill="none" stroke="#000"/><path d="M42 24L55 10M42 24h14" stroke="#000" stroke-width="1.500"/><text x="44" y="15" font-size="7" font-family="Liberation Sans" font-weight="bold">1</text><text x="50" y="23" font-size="6" font-family="Liberation Mono" font-weight="bold">ox</text>
<rect x="66" y="1" width="29" height="32" fill="#6fb8a0"/><rect x="69" y="4" width="23" height="26" fill="#cde6cc"/><path d="M69 4h23v26" fill="none" stroke="#b0a888" stroke-width="2"/>
<path d="M72.500 15.500l5-8h11v19h-16zM72.500 16.500h16M80.500 7.500v19" fill="none" stroke="#000" stroke-width="1.200"/>
<rect x="143" y="1" width="1" height="32" fill="#000"/><rect x="315" y="1" width="1" height="32" fill="#000"/>
<rect x="145.500" y="5" width="168" height="25" fill="#fffbd0" stroke="#b8b890" stroke-width="2"/>
<path d="M152 6h2v13h-2M150 6h4M150 19h4" stroke="#222" stroke-dasharray="1 1" fill="none"/>
<rect x="317" y="0" width="31" height="33" fill="#6fb8a0"/><rect x="320" y="3" width="25" height="27" fill="#d0e8d4"/>
<rect x="323.500" y="7.500" width="17" height="17" fill="none" stroke="#000"/><path d="M332 10v9M332 21v2" stroke="#000" stroke-width="2"/>
<rect x="348" y="0" width="1" height="33" fill="#000"/>
</svg>
<div class="t" style="left:98px;top:680px;font-size:13px;line-height:16px;letter-spacing:-.7px">X Y :</div>
<div class="t" style="left:352px;top:681px;line-height:14px;font-weight:normal;-webkit-text-stroke:.3px #000">&lt;M1&gt; - Select first corner</div>
<div class="a" style="left:1286px;top:672px;width:74px;height:33px;background:#58c9ac;border-left:2px solid #1f5f50"></div>
<div class="b" style="left:1293px;top:678px;width:67px;height:26px"></div>
<div class="t" style="left:1299px;top:680px;font-size:15px;line-height:17px;font-weight:normal;color:#111">Inch</div>
<div class="a" style="left:1344px;top:686px;width:12px;height:5px;background:#9bd8d8;border:1px solid;border-color:#dff #456 #456 #dff"></div>

<!-- status -->
<div class="a" style="left:0;top:705px;width:1360px;height:2px;background:#000"></div>
<div class="a" style="left:0;top:707px;width:1360px;height:24px;background:#5aa896"></div>
<div class="a" style="left:3px;top:710px;width:1357px;height:20px;background:#b0ffff;text-align:center"></div>
<div class="t" style="left:509px;top:714px;line-height:14px;font-weight:normal;-webkit-text-stroke:.3px #000">tp,#2216,Pad,X=3.256,Y=1.89368,oval10.63x55.12,POS</div>

<!-- popup -->
<div class="a" style="left:977px;top:383px;width:383px;height:298px;background:#0a4fd8;border-radius:6px 6px 0 0"></div>
<div class="a" style="left:978px;top:384px;width:382px;height:27px;background:linear-gradient(#0a62e8,#1a72f0 20%,#0860e4 70%,#0550d0);border-radius:6px 6px 0 0"></div>
<svg class="a" style="left:983px;top:391px" width="16" height="15"><rect width="16" height="15" fill="#222"/><rect x="1" y="1" width="14" height="13" fill="#f4f0c0"/><rect x="1" y="1" width="14" height="2" fill="#335"/><path d="M4 5l8 7M12 5l-8 7" stroke="#90a800" stroke-width="2"/></svg>
<div class="t" style="left:1002px;top:390px;font-size:13.300px;line-height:16px;color:#fff">Features Filter Popup</div>
<svg class="a" style="left:1334px;top:388px" width="22" height="22"><rect x=".5" y=".5" width="20" height="20" rx="3" fill="#e0603c" stroke="#fff"/><path d="M5.500 5.500l10 10M15.500 5.500l-10 10" stroke="#fff" stroke-width="2.500"/></svg>
<div class="a" style="left:981px;top:411px;width:375px;height:265px;background:#58c9ac"></div>
<div class="a" style="left:981px;top:412px;width:325px;height:48px;background:#000"></div>
<div class="a" style="left:981px;top:460px;width:375px;height:1px;background:#1f3f38"></div>
<div class="a" style="left:981px;top:490px;width:375px;height:1px;background:#1f3f38"></div>
<div class="a" style="left:981px;top:519px;width:375px;height:1px;background:#1f3f38"></div>
<div class="a" style="left:981px;top:553px;width:375px;height:3px;background:#2a3a38"></div>
<div class="a" style="left:981px;top:588px;width:375px;height:4px;background:#2a3a38"></div>
<div class="a" style="left:981px;top:646px;width:375px;height:4px;background:#2a3a38"></div>
<div class="a" style="left:1045px;top:556px;width:2px;height:32px;background:#000"></div>
<div class="a" style="left:1094px;top:556px;width:2px;height:32px;background:#000"></div>
<div class="a" style="left:1165px;top:556px;width:2px;height:32px;background:#000"></div>
<div class="a" style="left:1167px;top:557px;width:117px;height:31px;background:#9bd8d8"></div>
<div class="a" style="left:1284px;top:556px;width:1px;height:32px;background:#000"></div>

<svg class="a" style="left:977px;top:408px" width="335" height="55">
<defs>
<g id="pd"><rect width="45" height="45" fill="#9bd8d8"/><path d="M0 0H45L38 7H7V38L0 45Z" fill="#4a7a7a"/><path d="M45 0V45H0L7 38H38V7Z" fill="#c4eeee"/><rect x="8" y="9" width="28" height="28" fill="#000"/></g>
<g id="pc"><rect width="45" height="45" fill="#fffbd0"/><path d="M7 7H38V38H7Z" fill="#5c6a60"/><rect x="8" y="9" width="28" height="28" fill="#000"/></g>
</defs>
<use href="#pd" x="5" y="5"/><path d="M20 35L35 20" stroke="#9bd8d8" stroke-width="5" stroke-linecap="round"/>
<g transform="translate(51,5)"><rect width="45" height="45" fill="#9bd8d8"/><path d="M0 0H45L38 7H7V38L0 45Z" fill="#c4eeee"/><path d="M45 0V45H0L7 38H38V7Z" fill="#4a7a7a"/><rect x="7.500" y="8.500" width="29" height="29" fill="none" stroke="#000"/><circle cx="22" cy="23" r="7.500" fill="#000"/></g>
<use href="#pd" x="97" y="5"/><path d="M108 39V27h8V17h10q4 0 4 4V39Z" fill="#9bd8d8"/>
<use href="#pd" x="143" y="5"/><path d="M158 22a9 9 0 1 1 1 11" fill="none" stroke="#9bd8d8" stroke-width="2.500" transform="translate(1,0)"/>
<use href="#pd" x="189" y="5"/><path d="M204 36V22h14v14M204 29h14" fill="none" stroke="#9bd8d8" stroke-width="2.500"/>
<use href="#pc" x="237" y="5"/><path d="M259 19v18M250 28h18" stroke="#fffbd0" stroke-width="6"/>
<use href="#pc" x="283" y="5"/><path d="M296 28h18" stroke="#fffbd0" stroke-width="6"/>
</svg>

<svg class="a" style="left:981px;top:461px" width="60" height="60">
<defs><g id="sb"><rect width="27" height="27" fill="#9bd8d8"/><path d="M0 0H27L24 3H3V24L0 27Z" fill="#cff3f3"/><path d="M27 0V27H0L3 24H24V3Z" fill="#44787a"/><rect x="5.500" y="5.500" width="16" height="16" fill="none" stroke="#000"/><path d="M9 9h6l-2 2 5 5-2 2-5-5-2 2z" fill="#000"/></g></defs>
<use href="#sb" x="1" y="1"/><use href="#sb" x="30" y="1"/><path d="M49 11v-4M47 9h4" stroke="#000"/>
<use href="#sb" x="1" y="31"/><use href="#sb" x="30" y="31"/><path d="M49 41v-4M47 39h4" stroke="#000"/>
</svg>
<div class="b" style="left:1041px;top:462px;width:138px;height:27px">Include Symbols :</div>
<div class="b" style="left:1041px;top:492px;width:138px;height:27px">Exclude Symbols :</div>
<div class="in" style="left:1181px;top:462px;width:175px;height:27px"></div>
<div class="in" style="left:1181px;top:492px;width:175px;height:27px"></div>
<svg class="a" style="left:1186px;top:464px" width="8" height="50"><path d="M3 1v13M1 1h4M1 14h4M3 31v13M1 31h4M1 44h4" stroke="#222" stroke-dasharray="1 1" fill="none"/></svg>

<div class="b" style="left:982px;top:524px;width:115px;height:25px">User filter ...</div>
<div class="b" style="left:1101px;top:524px;width:67px;height:25px">Dcode :</div>
<div class="a" style="left:1169px;top:523px;width:76px;height:27px;background:#000"></div>
<div class="in" style="left:1172px;top:526px;width:70px;height:21px"></div>
<svg class="a" style="left:1175px;top:528px" width="8" height="16"><path d="M3.500 1v13M1 1h5M1 14h5" stroke="#222" fill="none"/></svg>

<div class="a" style="left:985px;top:565px;width:9px;height:10px;background:#b8e0e0;border:1px solid #779"></div>
<svg class="a" style="left:985px;top:565px" width="10" height="11"><path d="M2 5l2 4 4-8" stroke="#c01050" stroke-width="2" fill="none"/></svg>
<div class="t" style="left:1001px;top:563px;line-height:14px">Filter</div>
<div class="b" style="left:1048px;top:559px;width:45px;height:27px">Reset</div>
<div class="b" style="left:1097px;top:559px;width:66px;height:27px">Attr ...</div>
<div class="b" style="left:1172px;top:559px;width:110px;height:27px;justify-content:flex-start;padding-left:4px">All Profile</div>
<div class="a" style="left:1264px;top:570px;width:12px;height:5px;background:#9bd8d8;border:1px solid;border-color:#dff #456 #456 #dff"></div>

<div class="b o" style="left:982px;top:594px;width:121px;height:24px">Select</div>
<div class="b w" style="left:1106px;top:594px;width:121px;height:24px">Highlight</div>
<div class="b" style="left:1230px;top:594px;width:125px;height:24px">Search ...</div>
<div class="b o" style="left:982px;top:621px;width:121px;height:24px">Unselect</div>
<div class="b w" style="left:1106px;top:621px;width:121px;height:24px">Turn off</div>
<div class="b" style="left:1230px;top:621px;width:125px;height:24px">Histogram ...</div>
<div class="b" style="left:982px;top:651px;width:186px;height:25px">Close &amp; Reset</div>
<div class="b" style="left:1170px;top:651px;width:185px;height:25px">Close</div>
</body></html>
